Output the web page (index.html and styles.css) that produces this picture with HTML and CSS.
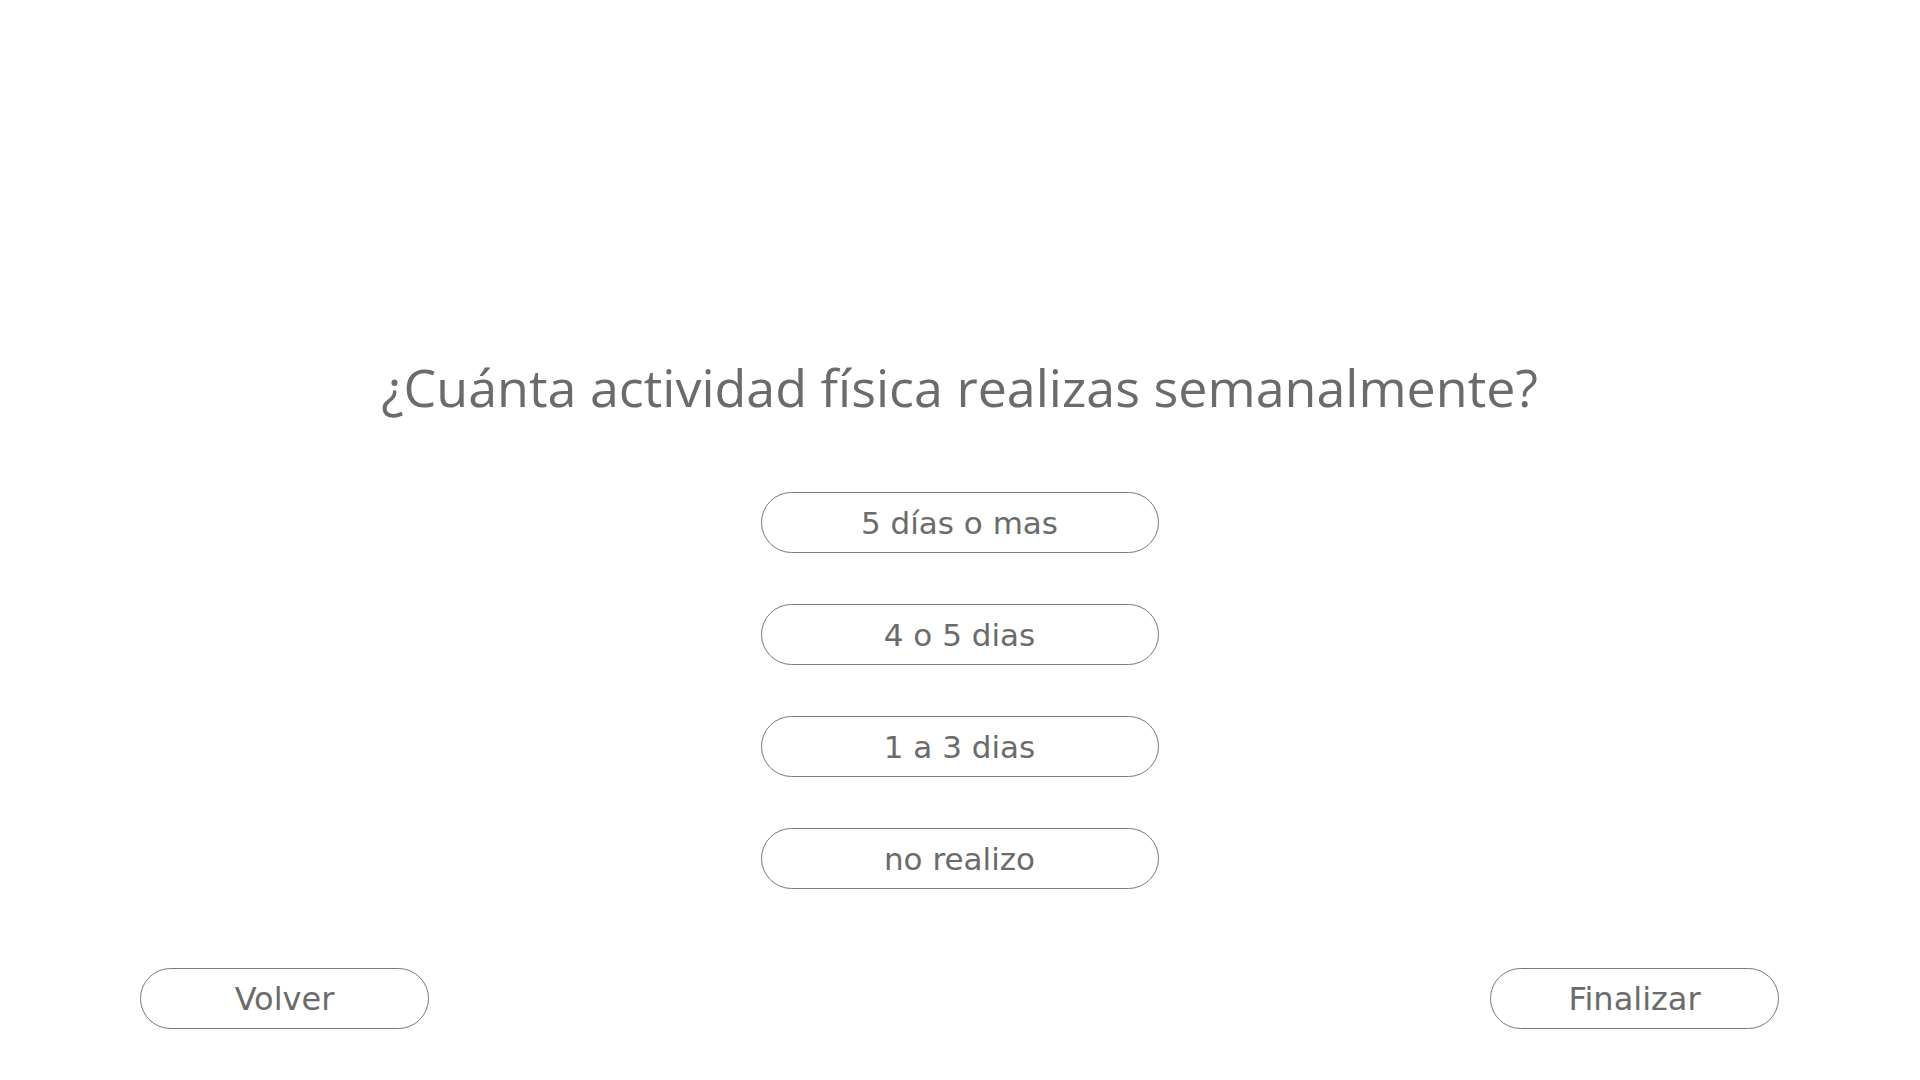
FILE: index.html
```html
<!DOCTYPE html>
<html lang="es">
<head>
<meta charset="utf-8">
<title>Encuesta</title>
<link rel="stylesheet" href="styles.css">
</head>
<body>
<main class="page">
  <h1 class="question">¿Cuánta actividad física realizas semanalmente?</h1>
  <div class="options">
    <button class="pill option">5 días o mas</button>
    <button class="pill option">4 o 5 dias</button>
    <button class="pill option">1 a 3 dias</button>
    <button class="pill option">no realizo</button>
  </div>
  <div class="footer">
    <button class="pill nav">Volver</button>
    <button class="pill nav">Finalizar</button>
  </div>
</main>
</body>
</html>
```

FILE: styles.css
```css
html, body {
  margin: 0;
  padding: 0;
  background: #ffffff;
}

.page {
  width: 1920px;
  height: 1080px;
  box-sizing: border-box;
  padding: 0 141px 0 140px;
  display: flex;
  flex-direction: column;
  font-family: "DejaVu Sans", "Liberation Sans", sans-serif;
  color: #6b6b6b;
}

.question {
  margin: 352px 0 0;
  font-family: "Open Sans", "DejaVu Sans", sans-serif;
  font-size: 52px;
  line-height: 70px;
  font-weight: 500;
  text-align: center;
  color: #6b6b6b;
}

.options {
  margin-top: 70px;
  display: flex;
  flex-direction: column;
  align-items: center;
  gap: 51px;
}

.pill {
  box-sizing: border-box;
  height: 61px;
  border: 1px solid #7a7a7a;
  border-radius: 31px;
  background: #ffffff;
  color: #6b6b6b;
  font-family: "DejaVu Sans", "Liberation Sans", sans-serif;
  font-size: 32px;
  padding: 0;
  display: flex;
  align-items: center;
  justify-content: center;
}

.option {
  width: 398px;
  font-size: 31px;
}

.footer {
  margin-top: 79px;
  display: flex;
  justify-content: space-between;
}

.nav {
  width: 289px;
}
```
